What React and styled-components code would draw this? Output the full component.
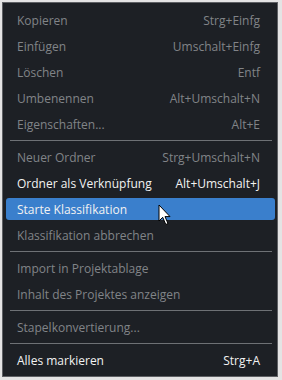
import React from "react";
import styled, { createGlobalStyle } from "styled-components";

const GlobalStyle = createGlobalStyle`
  html, body {
    margin: 0;
    padding: 0;
    background: #e4e4e4;
  }
  body {
    font-family: "Open Sans", "Noto Sans", sans-serif;
  }
`;

const Page = styled.div`
  padding: 2px 0 0 2px;
  width: 282px;
  height: 380px;
  box-sizing: border-box;
`;

const MenuBox = styled.div`
  position: relative;
  width: 276px;
  height: 375px;
  box-sizing: border-box;
  background: #1d2025;
  border: 1px solid #5e6064;
  padding: 4px 2px 1px 3px;
  display: flex;
  flex-direction: column;
`;

const Item = styled.div`
  height: 22px;
  margin: 2px 0;
  padding: 0 15px 0 11px;
  border-radius: 3px;
  display: flex;
  align-items: center;
  justify-content: space-between;
  font-size: 12px;
  color: ${(p) => (p.$disabled ? "#818488" : "#f2f2f2")};
  background: ${(p) => (p.$active ? "#3a7fcc" : "transparent")};
  white-space: nowrap;
`;

const Shortcut = styled.span`
  margin-left: 12px;
`;

const Separator = styled.div`
  height: 1px;
  margin: 3px 3px 3px 4px;
  background: #6e7175;
`;

const Cursor = styled.svg`
  position: absolute;
  left: 155px;
  top: 201px;
  pointer-events: none;
`;

const groups = [
  [
    { label: "Kopieren", key: "Strg+Einfg", disabled: true },
    { label: "Einfügen", key: "Umschalt+Einfg", disabled: true },
    { label: "Löschen", key: "Entf", disabled: true },
    { label: "Umbenennen", key: "Alt+Umschalt+N", disabled: true },
    { label: "Eigenschaften...", key: "Alt+E", disabled: true },
  ],
  [
    { label: "Neuer Ordner", key: "Strg+Umschalt+N", disabled: true },
    { label: "Ordner als Verknüpfung", key: "Alt+Umschalt+J" },
    { label: "Starte Klassifikation", active: true },
    { label: "Klassifikation abbrechen", disabled: true },
  ],
  [
    { label: "Import in Projektablage", disabled: true },
    { label: "Inhalt des Projektes anzeigen", disabled: true },
  ],
  [{ label: "Stapelkonvertierung...", disabled: true }],
  [{ label: "Alles markieren", key: "Strg+A" }],
];

export default function App() {
  return (
    <>
      <GlobalStyle />
      <Page>
        <MenuBox>
          {groups.map((group, gi) => (
            <React.Fragment key={gi}>
              {gi > 0 && <Separator />}
              {group.map((it) => (
                <Item key={it.label} $disabled={it.disabled} $active={it.active}>
                  <span>{it.label}</span>
                  {it.key && <Shortcut>{it.key}</Shortcut>}
                </Item>
              ))}
            </React.Fragment>
          ))}
          <Cursor width="14" height="22" viewBox="0 0 14 22">
            <path
              d="M1 1 L1 17 L4.7 13.3 L7.8 20.5 L10 19.5 L7 12.6 L12 12.6 Z"
              fill="#ffffff"
              stroke="#000000"
              strokeWidth="1"
              strokeLinejoin="miter"
            />
          </Cursor>
        </MenuBox>
      </Page>
    </>
  );
}
